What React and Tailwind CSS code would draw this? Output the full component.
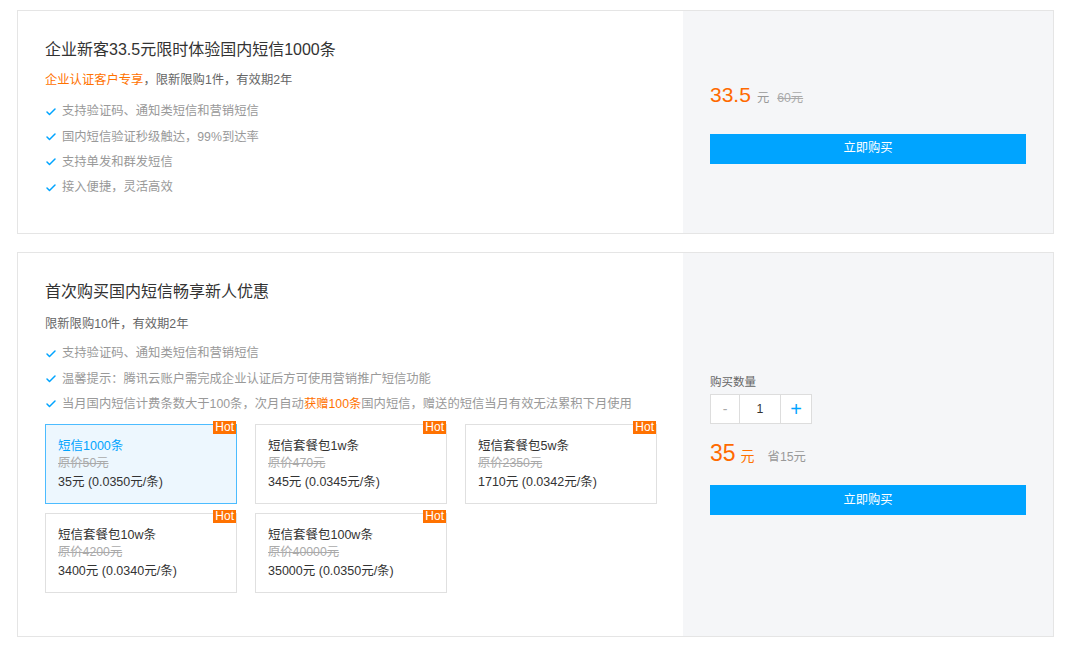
import React, { useState } from 'react';
import { Check } from 'lucide-react';

const font = { fontFamily: '"Liberation Sans", Arial, "Noto Sans CJK SC", sans-serif' };

function Feature({ children }) {
  return (
    <li className="flex items-center h-[25.3px] text-[12.3px] text-[#999]">
      <Check size={12} strokeWidth={3} className="text-[#00a4ff] mr-[5px] shrink-0" />
      <span>{children}</span>
    </li>
  );
}

function BuyButton() {
  return (
    <button className="w-full h-[30px] bg-[#00a4ff] text-white text-[12.3px] hover:bg-[#0092ee] transition-colors">
      立即购买
    </button>
  );
}

const packages = [
  { name: '短信1000条', orig: '原价50元', price: '35元 (0.0350元/条)' },
  { name: '短信套餐包1w条', orig: '原价470元', price: '345元 (0.0345元/条)' },
  { name: '短信套餐包5w条', orig: '原价2350元', price: '1710元 (0.0342元/条)' },
  { name: '短信套餐包10w条', orig: '原价4200元', price: '3400元 (0.0340元/条)' },
  { name: '短信套餐包100w条', orig: '原价40000元', price: '35000元 (0.0350元/条)' },
];

export default function App() {
  const [selected, setSelected] = useState(0);
  const [qty, setQty] = useState(1);

  return (
    <div className="min-h-[650px] bg-white pt-[10px] pl-[17px]" style={font}>
      <div className="w-[1037px] flex flex-col gap-[18px]">
        {/* Card 1 */}
        <div className="h-[224px] flex border border-[#e5e5e5] bg-white">
          <div className="flex-1 pl-[27px] pt-[27px]">
            <h3 className="text-[16px] leading-[24px] text-[#333]">企业新客33.5元限时体验国内短信1000条</h3>
            <p className="mt-[8px] text-[12.3px] leading-[20px] text-[#666]">
              <span className="text-[#ff7200]">企业认证客户专享</span>，限新限购1件，有效期2年
            </p>
            <ul className="mt-[9px]">
              <Feature>支持验证码、通知类短信和营销短信</Feature>
              <Feature>国内短信验证秒级触达，99%到达率</Feature>
              <Feature>支持单发和群发短信</Feature>
              <Feature>接入便捷，灵活高效</Feature>
            </ul>
          </div>
          <div className="w-[370px] bg-[#f5f6f8] px-[27px] pb-[2px] flex flex-col justify-center">
            <div className="flex items-baseline h-[24px]">
              <span className="text-[21px] text-[#ff6a00]">33.5</span>
              <span className="ml-[6px] text-[12.3px] text-[#999]">元</span>
              <span className="ml-[8px] text-[12.3px] text-[#aaa] line-through">60元</span>
            </div>
            <div className="mt-[31px]">
              <BuyButton />
            </div>
          </div>
        </div>

        {/* Card 2 */}
        <div className="h-[385px] flex border border-[#e5e5e5] bg-white">
          <div className="flex-1 pl-[27px] pt-[27px]">
            <h3 className="text-[16px] leading-[24px] text-[#333]">首次购买国内短信畅享新人优惠</h3>
            <p className="mt-[10px] text-[12.3px] leading-[20px] text-[#666]">限新限购10件，有效期2年</p>
            <ul className="mt-[7px]">
              <Feature>支持验证码、通知类短信和营销短信</Feature>
              <Feature>温馨提示：腾讯云账户需完成企业认证后方可使用营销推广短信功能</Feature>
              <Feature>
                当月国内短信计费条数大于100条，次月自动<span className="text-[#ff7200]">获赠100条</span>国内短信，赠送的短信当月有效无法累积下月使用
              </Feature>
            </ul>
            <div className="mt-[7px] grid grid-cols-[192px_192px_192px] gap-x-[18px] gap-y-[9px]">
              {packages.map((p, i) => {
                const active = selected === i;
                return (
                  <div
                    key={p.name}
                    onClick={() => setSelected(i)}
                    className={`relative h-[80px] cursor-pointer border pl-[12px] pt-[12px] ${
                      active ? 'border-[#4cbcff] bg-[#edf7fe]' : 'border-[#e0e0e0] bg-white'
                    }`}
                  >
                    <span className="absolute -top-[4px] right-0 h-[13px] px-[2px] bg-[#ff7200] text-white text-[12px] leading-[13px]">
                      Hot
                    </span>
                    <div className={`text-[12.5px] leading-[18px] ${active ? 'text-[#00a4ff]' : 'text-[#333]'}`}>{p.name}</div>
                    <div className="text-[12.3px] leading-[17px] text-[#aaa] line-through">{p.orig}</div>
                    <div className="mt-[1px] text-[12.5px] leading-[19px] text-[#333]">{p.price}</div>
                  </div>
                );
              })}
            </div>
          </div>
          <div className="w-[370px] bg-[#f5f6f8] px-[27px] flex flex-col justify-center">
            <div className="text-[11.5px] leading-[16px] text-[#666]">购买数量</div>
            <div className="mt-[4px] flex h-[30px] w-[102px] border border-[#ddd] bg-white">
              <button
                onClick={() => setQty(Math.max(1, qty - 1))}
                className="w-[29px] border-r border-[#ddd] text-[#aaa] text-[14px]"
              >
                -
              </button>
              <div className="w-[41px] border-r border-[#ddd] flex items-center justify-center text-[12.3px] text-[#333]">
                {qty}
              </div>
              <button onClick={() => setQty(qty + 1)} className="flex-1 text-[#00a4ff] text-[20px] leading-none">
                +
              </button>
            </div>
            <div className="mt-[12px] flex items-baseline h-[34px]">
              <span className="text-[23px] text-[#ff6a00]">{35 * qty}</span>
              <span className="ml-[5px] text-[14px] text-[#ff7200]">元</span>
              <span className="ml-[13px] text-[12.3px] text-[#999]">省{15 * qty}元</span>
            </div>
            <div className="mt-[15px]">
              <BuyButton />
            </div>
          </div>
        </div>
      </div>
    </div>
  );
}
